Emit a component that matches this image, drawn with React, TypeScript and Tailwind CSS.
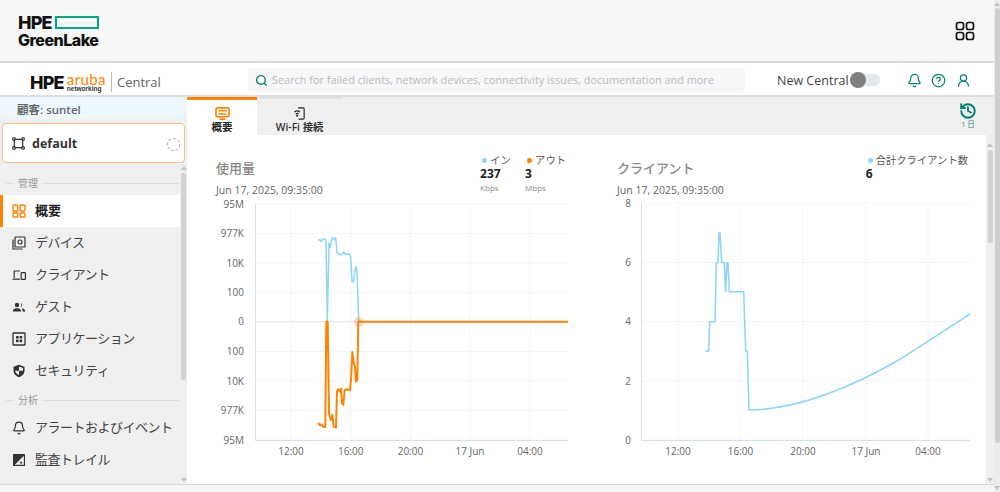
import React from "react";
import { Bell, CircleHelp, History, Search, UserRound } from "lucide-react";

const toPage = (ox: number, oy: number, pts: number[][]) =>
  pts.map(([x, y]) => `${(ox + x / 3).toFixed(1)},${(oy + y / 3).toFixed(1)}`).join(" ");

const inPts = [[295,122],[300,118],[304,125],[309,117],[315,116],[318,125],[322,362],[327,130],[331,142],[335,115],[340,113],[343,120],[347,113],[351,158],[358,164],[368,163],[371,155],[376,163],[388,162],[392,170],[396,244],[401,246],[405,210],[408,200],[411,215],[416,362],[420,365]];
const outPts = [[295,668],[299,675],[303,673],[310,680],[316,681],[319,365],[323,365],[327,640],[333,660],[337,645],[341,680],[348,683],[351,575],[355,568],[359,575],[363,566],[366,610],[370,614],[374,570],[380,568],[390,571],[393,540],[397,456],[401,490],[405,500],[408,545],[412,540],[415,365],[1044,365]];
const clientPts = [[316,484],[326,484],[329,395],[345,395],[349,218],[354,218],[357,128],[360,128],[365,218],[373,218],[377,305],[381,218],[384,218],[388,305],[431,305],[437,482],[442,484],[447,660]];
const clientTail = "C 790 409.500, 840 394, 900 359.300 L 970 314";

const FONT = "font-['Open_Sans','Noto_Sans_CJK_JP',sans-serif]";

function GridIcon({ className }: { className?: string }) {
  return (
    <svg viewBox="0 0 20 20" fill="none" stroke="currentColor" strokeWidth="1.700" className={className}>
      <rect x="1.500" y="1.500" width="7" height="7" rx="2" />
      <rect x="11.500" y="1.500" width="7" height="7" rx="2" />
      <rect x="1.500" y="11.500" width="7" height="7" rx="2" />
      <rect x="11.500" y="11.500" width="7" height="7" rx="2" />
    </svg>
  );
}

const OverviewIcon = () => (
  <svg viewBox="0 0 14 14" fill="none" stroke="#ff8300" strokeWidth="1.400" className="w-[14px] h-[14px] shrink-0">
    <rect x="1" y="1" width="4.800" height="6" rx="0.800" />
    <rect x="8.200" y="1" width="4.800" height="6" rx="0.800" />
    <rect x="1" y="9" width="4.800" height="4" rx="0.800" />
    <rect x="8.200" y="9" width="4.800" height="4" rx="0.800" />
  </svg>
);

const iconCls = "w-[14px] h-[14px] text-[#333] shrink-0";

const DeviceIcon = () => (
  <svg viewBox="0 0 14 14" fill="none" stroke="currentColor" strokeWidth="1.200" className={iconCls}>
    <rect x="3" y="1" width="10" height="10" rx="0.600" />
    <circle cx="8" cy="6" r="2" />
    <path d="M1 3.500V13h9.500" />
  </svg>
);
const ClientIcon = () => (
  <svg viewBox="0 0 14 14" fill="none" stroke="currentColor" strokeWidth="1.200" className={iconCls}>
    <path d="M8 3H2.200v7" />
    <path d="M0.500 11.200H8" />
    <rect x="9.200" y="4.600" width="4.200" height="6.800" rx="0.600" />
  </svg>
);
const GuestIcon = () => (
  <svg viewBox="0 0 14 14" fill="currentColor" className={iconCls}>
    <circle cx="5" cy="5" r="2.200" />
    <path d="M0.800 11.500c0-2.200 2-3.300 4.200-3.300s4.200 1.100 4.200 3.300z" />
    <path d="M8.600 2.900a2.200 2.200 0 0 1 0 4.200 3.400 3.400 0 0 0 0-4.200z" />
    <path d="M10 8.300c1.800.2 3.200 1.200 3.200 3.200h-2.600c0-1.300-.2-2.300-.6-3.200z" />
  </svg>
);
const AppIcon = () => (
  <svg viewBox="0 0 14 14" className={iconCls}>
    <rect x="1" y="1" width="12" height="12" rx="0.500" fill="none" stroke="currentColor" strokeWidth="1.300" />
    <rect x="4" y="4" width="2.600" height="2.600" rx="0.600" fill="currentColor" />
    <rect x="7.600" y="4" width="2.600" height="2.600" rx="0.600" fill="currentColor" />
    <rect x="4" y="7.600" width="2.600" height="2.600" rx="0.600" fill="currentColor" />
    <rect x="7.600" y="7.600" width="2.600" height="2.600" rx="0.600" fill="currentColor" />
  </svg>
);
const ShieldIcon = () => (
  <svg viewBox="0 0 14 14" className={iconCls}>
    <path d="M7 .8 12.500 2.800v4c0 3.200-2.400 5.400-5.500 6.500C3.900 12.200 1.500 10 1.500 6.800v-4z" fill="currentColor" />
    <path d="M7 6.800H3.200c.2 2 1.700 3.500 3.800 4.400z" fill="#efefef" />
    <path d="M7 2.500l4 1.400v2.900H7z" fill="#efefef" />
  </svg>
);
const AuditIcon = () => (
  <svg viewBox="0 0 14 14" className={iconCls}>
    <rect x="1" y="1" width="12" height="12" rx="0.600" fill="currentColor" />
    <path d="M11.800 2.800v9H2.800z" fill="#efefef" />
    <path d="M9 8.500v2.500M7.800 9.700h2.500" stroke="currentColor" strokeWidth="0.900" />
  </svg>
);
const NetIcon = () => (
  <svg viewBox="0 0 14 14" fill="none" stroke="#333" strokeWidth="1.300" className="w-[13px] h-[13px] shrink-0 -mt-[2px]">
    <path d="M3 2.500h8M3 11.500h8M2.500 3v8M11.500 3v8" />
    <rect x="0.800" y="0.800" width="2.600" height="2.600" rx="0.600" />
    <rect x="10.600" y="0.800" width="2.600" height="2.600" rx="0.600" />
    <rect x="0.800" y="10.600" width="2.600" height="2.600" rx="0.600" />
    <rect x="10.600" y="10.600" width="2.600" height="2.600" rx="0.600" />
  </svg>
);

const ArrowUp = ({ className }: { className?: string }) => (
  <svg viewBox="0 0 6 4" className={`w-[6px] h-[4px] shrink-0 ${className ?? ""}`}><path d="M3 0 6 4H0z" fill="#c4c4c4" /></svg>
);
const ArrowDown = ({ className }: { className?: string }) => (
  <svg viewBox="0 0 6 4" className={`w-[6px] h-[4px] shrink-0 ${className ?? ""}`}><path d="M3 4 6 0H0z" fill="#c4c4c4" /></svg>
);

function NavItem({ icon, label }: { icon: React.ReactNode; label: string }) {
  return (
    <div className="flex items-center h-[32px] pl-[12px] gap-[9px]">
      {icon}
      <span className="text-[13px] tracking-[-0.5px] text-[#444] whitespace-nowrap">{label}</span>
    </div>
  );
}

function SectionLabel({ label }: { label: string }) {
  return (
    <div className="flex items-center h-[20px] pl-[6px] pr-[1px] gap-[4px] shrink-0">
      <div className="w-[8px] h-[1px] bg-[#dcdcdc]" />
      <span className="text-[10px] text-[#999]">{label}</span>
      <div className="flex-1 h-[1px] bg-[#dcdcdc]" />
    </div>
  );
}

const axisText = { fontSize: 10, fill: "#666", fontFamily: "'Open Sans',sans-serif" };

function LeftChart() {
  const ys = [[204, "95M"], [233.500, "977K"], [263, "10K"], [292.700, "100"], [321.700, "0"], [351.500, "100"], [381, "10K"], [410.500, "977K"], [440, "95M"]] as const;
  const xs = [[291, "12:00"], [350.700, "16:00"], [410.500, "20:00"], [470, "17 Jun"], [530, "04:00"]] as const;
  return (
    <svg viewBox="205 196 375 264" className="w-[375px] h-[264px] block">
      {ys.map(([y], i) => (
        <line key={i} x1="255" x2="568" y1={y} y2={y} stroke={i === 4 ? "#e4e4e4" : "#f3f5f8"} />
      ))}
      {xs.map(([x]) => (
        <line key={x} x1={x} x2={x} y1="204" y2="440" stroke="#f3f5f8" />
      ))}
      <path d="M255.500 204V440.500H568" fill="none" stroke="#d3e0f2" />
      {ys.map(([y, t], i) => (
        <text key={i} x="244" y={y + 3.500} textAnchor="end" {...axisText}>{t}</text>
      ))}
      {xs.map(([x, t]) => (
        <text key={x} x={x} y="455" textAnchor="middle" {...axisText}>{t}</text>
      ))}
      <polyline points={toPage(220, 200, inPts)} fill="none" stroke="#8ed6f8" strokeWidth="1.500" strokeLinejoin="round" />
      <polyline points={toPage(220, 200, outPts)} fill="none" stroke="#ff8300" strokeWidth="2" strokeLinejoin="round" />
      <circle cx="359" cy="321.700" r="5" fill="#d98a3c" opacity="0.300" />
    </svg>
  );
}

function RightChart() {
  const ys = [[203, "8"], [262.500, "6"], [321.500, "4"], [381, "2"], [440, "0"]] as const;
  const xs = [[678, "12:00"], [740.500, "16:00"], [803, "20:00"], [866, "17 Jun"], [928, "04:00"]] as const;
  return (
    <svg viewBox="605 196 375 264" className="w-[375px] h-[264px] block">
      {ys.map(([y], i) => (
        <line key={i} x1="642" x2="970" y1={y} y2={y} stroke="#f3f5f8" />
      ))}
      {xs.map(([x]) => (
        <line key={x} x1={x} x2={x} y1="203" y2="440" stroke="#f3f5f8" />
      ))}
      <path d="M641.500 203V440.500H970" fill="none" stroke="#d3e0f2" />
      {ys.map(([y, t], i) => (
        <text key={i} x="631" y={y + 3.500} textAnchor="end" {...axisText}>{t}</text>
      ))}
      {xs.map(([x, t]) => (
        <text key={x} x={x} y="455" textAnchor="middle" {...axisText}>{t}</text>
      ))}
      <path d={"M" + toPage(600, 190, clientPts) + " " + clientTail} fill="none" stroke="#8ed6f8" strokeWidth="1.600" strokeLinejoin="round" />
    </svg>
  );
}

function Legend({ color, label, value, unit, className }: { color: string; label: string; value: string; unit?: string; className?: string }) {
  return (
    <div className={`flex flex-col ${className ?? ""}`}>
      <div className="flex items-center gap-[3px] pl-[2px] h-[13px] text-[10.300px] text-[#555] whitespace-nowrap">
        <span className="w-[5px] h-[5px] rounded-full" style={{ backgroundColor: color }} />
        {label}
      </div>
      <div className="h-[14px] leading-[14px] text-[12px] font-bold text-[#222]">{value}</div>
      {unit && <div className="h-[14px] leading-[14px] text-[8px] text-[#888]">{unit}</div>}
    </div>
  );
}

export default function App() {
  return (
    <div className={`flex w-[1000px] h-[492px] overflow-hidden bg-white ${FONT}`}>
      <div className="flex flex-col w-[994px] h-full">
        {/* global top bar */}
        <header className="flex items-center justify-between h-[63px] shrink-0 bg-[#f7f7f7] border-b-2 border-[#d9d9d9] pl-[18px] pr-[19px]">
          <div className="flex flex-col font-['Inter',sans-serif] text-[#111] leading-none">
            <div className="flex items-center gap-[3px] h-[18px]">
              <span className="text-[18px] font-extrabold tracking-[-0.800px]">HPE</span>
              <span className="w-[44px] h-[13px] border-[2.500px] border-[#01a982]" />
            </div>
            <span className="text-[16px] font-extrabold tracking-[-0.500px]">GreenLake</span>
          </div>
          <GridIcon className="w-[20px] h-[20px] text-[#111]" />
        </header>

        {/* product bar */}
        <div className="flex items-center h-[34px] shrink-0 bg-white border-b-2 border-[#dedede] pt-[2px]">
          <div className="flex items-center w-[248px] pl-[30px] shrink-0 mt-[6px]">
            <span className="font-['Inter',sans-serif] font-extrabold text-[18px] tracking-[-0.800px] text-[#111] leading-none">HPE</span>
            <span className="flex flex-col items-start ml-[3px] leading-none">
              <span className="font-['Lato',sans-serif] text-[15px] h-[11px] leading-[11px] text-[#ff8300] tracking-[0.400px]">aruba</span>
              <span className="font-['Liberation_Sans',sans-serif] font-bold text-[6.500px] h-[8px] leading-[8px] text-[#333]">networking</span>
            </span>
            <span className="w-[1px] h-[20px] bg-[#bbb] ml-[5px] -mt-[2px]" />
            <span className="text-[13px] text-[#666] ml-[5px]">Central</span>
          </div>
          <div className="flex items-center w-[497px] h-[24px] rounded-[3px] bg-[#f6f7f9] pl-[7px] gap-[4px] shrink-0">
            <Search className="w-[13px] h-[13px] text-[#01806f]" strokeWidth={2.500} />
            <span className="text-[10.900px] text-[#bbb] whitespace-nowrap">Search for failed clients, network devices, connectivity issues, documentation and more</span>
          </div>
          <span className="text-[12.500px] text-[#444] ml-[32px] whitespace-nowrap mt-[2px]">New Central</span>
          <div className="relative w-[30px] h-[12px] rounded-full bg-[#e5e8ed] ml-[1px]">
            <span className="absolute left-0 top-[-2px] w-[16px] h-[16px] rounded-full bg-[#808080]" />
          </div>
          <Bell className="w-[15px] h-[15px] text-[#01806f] ml-[27px]" strokeWidth={2} />
          <CircleHelp className="w-[15px] h-[15px] text-[#01806f] ml-[9px]" strokeWidth={2} />
          <UserRound className="w-[15px] h-[15px] text-[#01806f] ml-[10px]" strokeWidth={2} />
        </div>

        <div className="flex flex-1 min-h-0">
          {/* sidebar */}
          <aside className="flex flex-col w-[187px] shrink-0 bg-[#efefef]">
            <div className="flex items-center h-[22px] bg-[#ebf6fd] pl-[17px] pt-[3px] text-[11.500px] font-semibold text-[#666]">顧客: suntel</div>
            <div className="flex items-center h-[40px] mx-[2px] mt-[4px] rounded-[4px] border border-[#f9c07f] bg-white pl-[9px] pr-[4px] pt-[2px]">
              <NetIcon />
              <span className="ml-[7px] text-[12.500px] font-bold text-[#333] flex-1">default</span>
              <span className="w-[13px] h-[13px] rounded-full border border-dashed border-[#aaa]" />
            </div>
            <div className="flex flex-1 min-h-0">
              <nav className="flex flex-col w-[180px] pt-[10px]">
                <SectionLabel label="管理" />
                <div className="flex items-center h-[32px] mt-[2px] bg-white border-l-[3px] border-[#ff8300] pl-[9px] gap-[9px]">
                  <OverviewIcon />
                  <span className="text-[13px] font-semibold text-[#222]">概要</span>
                </div>
                <NavItem icon={<DeviceIcon />} label="デバイス" />
                <NavItem icon={<ClientIcon />} label="クライアント" />
                <NavItem icon={<GuestIcon />} label="ゲスト" />
                <NavItem icon={<AppIcon />} label="アプリケーション" />
                <NavItem icon={<ShieldIcon />} label="セキュリティ" />
                <div className="mt-[3px] mb-[2px]"><SectionLabel label="分析" /></div>
                <NavItem icon={<Bell className={iconCls} strokeWidth={2} />} label="アラートおよびイベント" />
                <NavItem icon={<AuditIcon />} label="監査トレイル" />
              </nav>
              <div className="flex flex-col items-center w-[7px] pt-[3px] pb-[2px]">
                <ArrowUp />
                <div className="w-[5px] h-[207px] rounded-full bg-[#d2d2d2] mt-[3px]" />
                <ArrowDown className="mt-auto" />
              </div>
            </div>
          </aside>

          {/* main */}
          <main className="flex flex-col flex-1 min-w-0">
            <div className="flex h-[38px] shrink-0 bg-[#efefef]">
              <div className="flex flex-col items-center w-[70px] h-full bg-white border-t-[3px] border-[#ff8300] pt-[7px]">
                <svg viewBox="0 0 16 14" className="w-[15px] h-[13px]" fill="none" stroke="#ff8300" strokeWidth="1.800">
                  <rect x="1" y="1" width="14" height="9.500" rx="1.500" />
                  <path d="M3.500 4h9M3.500 7.500h9M5 13h6" />
                </svg>
                <span className="text-[10.500px] font-bold leading-[14px] text-[#222]">概要</span>
              </div>
              <div className="flex flex-col items-center w-[85px] h-full border-t-2 border-[#dfe3e8] pt-[8px]">
                <svg viewBox="0 0 14 14" className="w-[13px] h-[13px]" fill="none" stroke="#222" strokeWidth="1.200">
                  <path d="M5.500 1h5.500a1 1 0 0 1 1 1v10a1 1 0 0 1-1 1H6" />
                  <path d="M1.500 5.500a4.500 4.500 0 0 1 6 0M3 7.500a2.400 2.400 0 0 1 3 0" />
                  <circle cx="4.500" cy="9.500" r="0.500" fill="#222" />
                </svg>
                <span className="text-[10.300px] font-semibold leading-[14px] text-[#333] whitespace-nowrap">Wi-Fi 接続</span>
              </div>
              <div className="flex flex-col items-center ml-auto mr-[17px] pt-[5px]">
                <History className="w-[18px] h-[18px] text-[#01806f]" strokeWidth={2.500} />
                <span className="text-[7.500px] leading-[9px] text-[#2e8f80]">1 日</span>
              </div>
            </div>
            <div className="flex flex-1 min-h-0">
              <div className="flex flex-1 pt-[22px] pl-[18px] overflow-hidden">
                <section className="w-[400px] shrink-0">
                  <div className="flex w-[375px] h-[39px]">
                    <div className="flex flex-col pl-[11px] pt-[2px]">
                      <span className="text-[13px] leading-[18px] font-medium text-[#888]">使用量</span>
                      <span className="text-[10.500px] leading-[14px] text-[#666] mt-[6px] whitespace-nowrap">Jun 17, 2025, 09:35:00</span>
                    </div>
                    <div className="flex ml-auto mr-[14px] -mt-[3px]">
                      <Legend color="#8ed6f8" label="イン" value="237" unit="Kbps" className="w-[45px]" />
                      <Legend color="#ff8300" label="アウト" value="3" unit="Mbps" />
                    </div>
                  </div>
                  <LeftChart />
                </section>
                <section className="w-[375px] shrink-0">
                  <div className="flex w-[375px] h-[39px]">
                    <div className="flex flex-col pl-[12px] pt-[2px]">
                      <span className="text-[13px] leading-[18px] font-medium text-[#888]">クライアント</span>
                      <span className="text-[10.500px] leading-[14px] text-[#666] mt-[6px] whitespace-nowrap">Jun 17, 2025, 09:35:00</span>
                    </div>
                    <div className="ml-auto mr-[12px] -mt-[3px]">
                      <Legend color="#8ed6f8" label="合計クライアント数" value="6" />
                    </div>
                  </div>
                  <RightChart />
                </section>
              </div>
              <div className="flex flex-col items-center w-[8px] shrink-0 bg-[#efefef] pt-[8px] pb-[2px]">
                <ArrowUp />
                <div className="w-[5px] h-[93px] rounded-full bg-[#d2d2d2] mt-[3px]" />
                <ArrowDown className="mt-auto" />
              </div>
            </div>
          </main>
        </div>
        <div className="h-[8px] shrink-0 bg-[#f5f5f5] border-t border-[#d9d9d9]" />
      </div>
      {/* page scrollbar */}
      <div className="flex flex-col items-center w-[6px] shrink-0 bg-[#ececec] pt-[2px] pb-[2px]">
        <ArrowUp />
        <div className="w-[5px] h-[435px] rounded-full bg-[#cfcfcf] mt-[2px]" />
        <ArrowDown className="mt-auto" />
      </div>
    </div>
  );
}
